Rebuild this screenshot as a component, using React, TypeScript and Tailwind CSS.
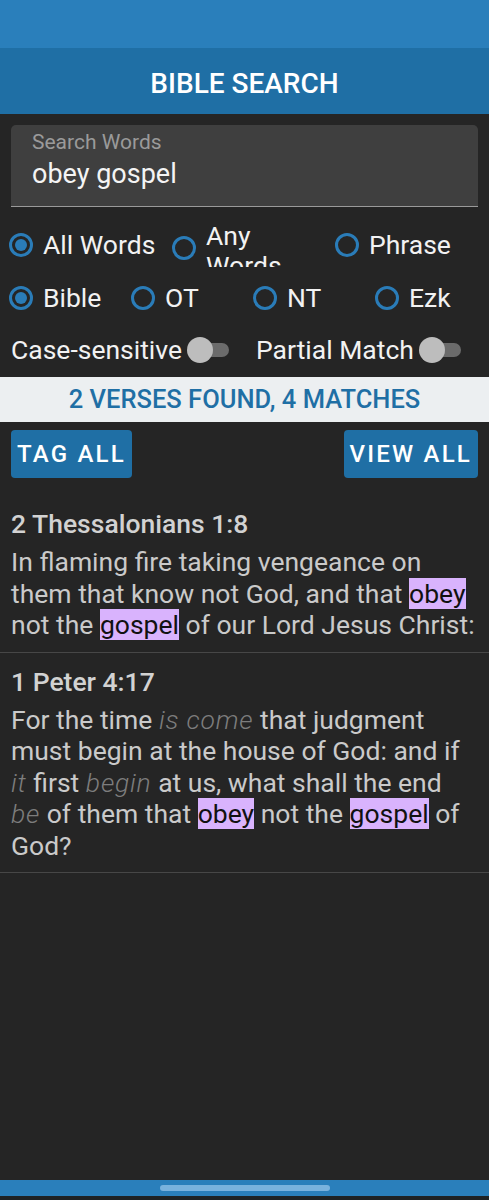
import React, { useState } from 'react';

type Segment = { text: string; kind?: 'hit' | 'added' };

interface Verse {
    ref: string;
    parts: Segment[];
}

const verses: Verse[] = [
    {
        ref: '2 Thessalonians 1:8',
        parts: [
            { text: 'In flaming fire taking vengeance on them that know not God, and that ' },
            { text: 'obey', kind: 'hit' },
            { text: ' not the ' },
            { text: 'gospel', kind: 'hit' },
            { text: ' of our Lord Jesus Christ:' },
        ],
    },
    {
        ref: '1 Peter 4:17',
        parts: [
            { text: 'For the time ' },
            { text: 'is come', kind: 'added' },
            { text: ' that judgment must begin at the house of God: and if ' },
            { text: 'it', kind: 'added' },
            { text: ' first ' },
            { text: 'begin', kind: 'added' },
            { text: ' at us, what shall the end ' },
            { text: 'be', kind: 'added' },
            { text: ' of them that ' },
            { text: 'obey', kind: 'hit' },
            { text: ' not the ' },
            { text: 'gospel', kind: 'hit' },
            { text: ' of God?' },
        ],
    },
];

const Radio: React.FC<{ label: string; checked: boolean; onClick: () => void; clip?: boolean }> = ({ label, checked, onClick, clip }) => (
    <button onClick={onClick} className="flex items-center gap-[10px] text-left">
        <span className="w-[24px] h-[24px] shrink-0 rounded-full border-[3px] border-[#2a7cb8] flex items-center justify-center">
            {checked && <span className="w-[12px] h-[12px] rounded-full bg-[#2a7cb8]" />}
        </span>
        {clip ? (
            <span className="block w-[100px] h-[46px] -mt-[8px] overflow-hidden text-[26.5px] leading-[30px] text-[#f2f2f2]">{label}</span>
        ) : (
            <span className="text-[26.5px] leading-[32px] text-[#f2f2f2] whitespace-nowrap">{label}</span>
        )}
    </button>
);

const Toggle: React.FC<{ label: string }> = ({ label }) => {
    const [on, setOn] = useState(false);
    return (
        <button onClick={() => setOn(!on)} className="flex items-center">
            <span className="text-[26.5px] text-[#f2f2f2] leading-[32px] whitespace-nowrap">{label}</span>
            <span className="relative w-[42px] h-[28px] ml-[5px] flex items-center">
                <span className={`absolute left-[4px] right-0 h-[14px] rounded-full ${on ? 'bg-[#7fb3d9]' : 'bg-[#6b6b6b]'}`} />
                <span className={`absolute w-[26px] h-[26px] rounded-full ${on ? 'left-[16px] bg-[#2a7cb8]' : 'left-0 bg-[#bdbdbd]'}`} />
            </span>
        </button>
    );
};

export default function App() {
    const [mode, setMode] = useState('all');
    const [scope, setScope] = useState('bible');

    return (
        <div className="w-[489px] h-[1200px] bg-[#252525] flex flex-col overflow-hidden" style={{ fontFamily: 'Roboto, "Noto Sans", sans-serif' }}>
            <div className="h-[48px] bg-[#2a7fbb] shrink-0" />
            <div className="h-[66px] bg-[#1f6fa5] shrink-0 flex items-center justify-center">
                <h1 className="text-[28px] font-medium text-white mt-[6px]">BIBLE SEARCH</h1>
            </div>

            <div className="px-[11px] pt-[11px]">
                <div className="h-[82px] bg-[#3f3f3f] rounded-t-[5px] border-b-[1.5px] border-[#9a9a9a] px-[21px] pt-[4px]">
                    <div className="text-[21px] text-[#9a9a9a] leading-[26px]">Search Words</div>
                    <div className="text-[27px] text-[#f4f4f4] leading-[34px] mt-[2px]">obey gospel</div>
                </div>
            </div>

            <div className="grid grid-cols-[163px_163px_1fr] px-[9px] mt-[22px] h-[32px] items-start">
                <Radio label="All Words" checked={mode === 'all'} onClick={() => setMode('all')} />
                <Radio label="Any Words" checked={mode === 'any'} onClick={() => setMode('any')} clip />
                <Radio label="Phrase" checked={mode === 'phrase'} onClick={() => setMode('phrase')} />
            </div>

            <div className="grid grid-cols-[122px_122px_122px_1fr] px-[9px] mt-[21px]">
                <Radio label="Bible" checked={scope === 'bible'} onClick={() => setScope('bible')} />
                <Radio label="OT" checked={scope === 'ot'} onClick={() => setScope('ot')} />
                <Radio label="NT" checked={scope === 'nt'} onClick={() => setScope('nt')} />
                <Radio label="Ezk" checked={scope === 'ezk'} onClick={() => setScope('ezk')} />
            </div>

            <div className="flex items-center gap-[27px] px-[11px] mt-[20px]">
                <Toggle label="Case-sensitive" />
                <Toggle label="Partial Match" />
            </div>

            <div className="mt-[11px] h-[45px] bg-[#eceff1] flex items-center justify-center">
                <span className="text-[25.5px] font-medium text-[#1f6fa5]">2 VERSES FOUND, 4 MATCHES</span>
            </div>

            <div className="flex justify-between px-[11px] mt-[8px]">
                <button className="h-[48px] px-[6px] bg-[#1f6fa5] rounded-[4px] text-white text-[24px] font-medium tracking-[2.2px]">TAG ALL</button>
                <button className="h-[48px] px-[6px] bg-[#1f6fa5] rounded-[4px] text-white text-[24px] font-medium tracking-[2.2px]">VIEW ALL</button>
            </div>

            <div className="mt-[17px]">
                {verses.map((v) => (
                    <div key={v.ref} className="pl-[11px] pr-[13px] pt-[13px] pb-[11px] border-b border-[#474747]">
                        <div className="text-[26.5px] font-medium text-[#d2d2d2] leading-[32px]">{v.ref}</div>
                        <p className="text-[26.5px] text-[#cacaca] leading-[31.5px] mt-[6px]">
                            {v.parts.map((p, i) =>
                                p.kind === 'hit' ? (
                                    <span key={i} className="bg-[#d9b3fd] text-[#111]">{p.text}</span>
                                ) : p.kind === 'added' ? (
                                    <i key={i} className="text-[#7d7d7d] font-light tracking-[0.8px]">{p.text}</i>
                                ) : (
                                    <span key={i}>{p.text}</span>
                                )
                            )}
                        </p>
                    </div>
                ))}
            </div>

            <div className="flex-1" />
            <div className="h-[16px] bg-[#2a7fbb] shrink-0 flex items-center justify-center">
                <div className="w-[170px] h-[6px] rounded-full bg-[#79b2dd]" />
            </div>
            <div className="h-[4px] shrink-0 bg-[#1e2224]" />
        </div>
    );
}
